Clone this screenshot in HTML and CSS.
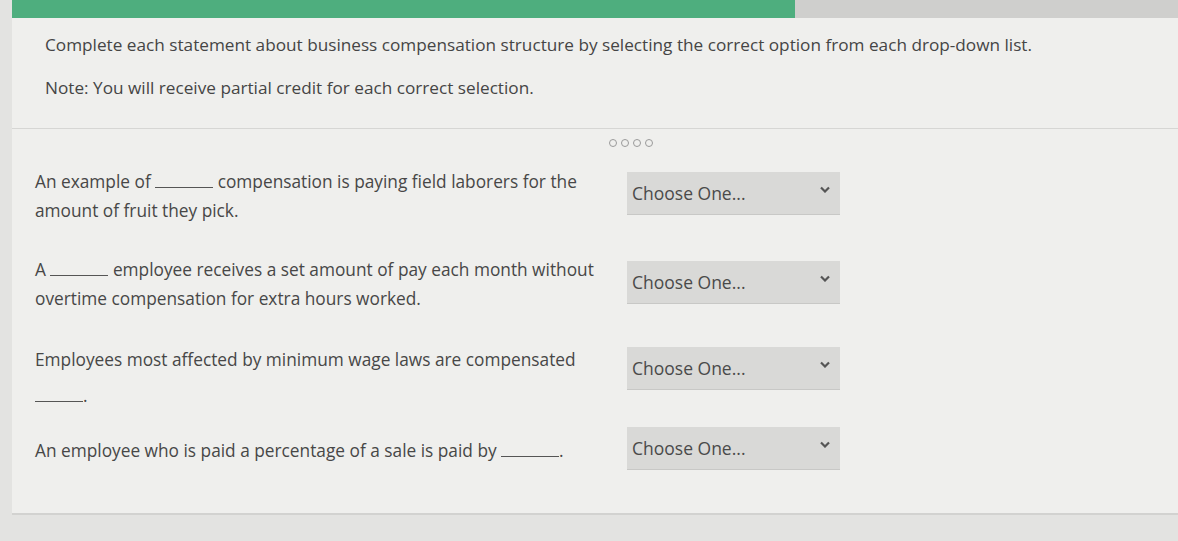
FILE: index.html
```html
<!DOCTYPE html>
<html>
<head>
<meta charset="utf-8">
<link rel="stylesheet" href="styles.css">
</head>
<body>
<div class="page">
  <div class="topbar">
    <div class="progress"></div>
    <div class="rest"></div>
  </div>
  <div class="card">
    <div class="intro">
      <p class="line1">Complete each statement about business compensation structure by selecting the correct option from each drop-down list.</p>
      <p class="line2">Note: You will receive partial credit for each correct selection.</p>
    </div>
    <div class="divider"></div>
    <div class="dots"><span></span><span></span><span></span><span></span></div>
    <div class="questions">
      <div class="row r1">
        <div class="q">An example of <span class="blank"></span> compensation is paying field laborers for the<br>amount of fruit they pick.</div>
        <div class="select"><span>Choose One...</span><svg viewBox="0 0 10 6" class="chev"><path d="M1 1 L5 5 L9 1" /></svg></div>
      </div>
      <div class="row r2">
        <div class="q">A <span class="blank"></span> employee receives a set amount of pay each month without<br>overtime compensation for extra hours worked.</div>
        <div class="select"><span>Choose One...</span><svg viewBox="0 0 10 6" class="chev"><path d="M1 1 L5 5 L9 1" /></svg></div>
      </div>
      <div class="row r3">
        <div class="q">Employees most affected by minimum wage laws are compensated<br><span class="blank b3"></span>.</div>
        <div class="select"><span>Choose One...</span><svg viewBox="0 0 10 6" class="chev"><path d="M1 1 L5 5 L9 1" /></svg></div>
      </div>
      <div class="row r4">
        <div class="q">An employee who is paid a percentage of a sale is paid by <span class="blank"></span>.</div>
        <div class="select"><span>Choose One...</span><svg viewBox="0 0 10 6" class="chev"><path d="M1 1 L5 5 L9 1" /></svg></div>
      </div>
    </div>
  </div>
</div>
</body>
</html>
```
FILE: styles.css
```css
* { box-sizing: border-box; }
html, body { margin: 0; padding: 0; }
body {
  background: #dcdcda;
  font-family: "Open Sans", "Liberation Sans", sans-serif;
  color: #474747;
  width: 1178px;
  height: 541px;
  overflow: hidden;
}
.page {
  padding-left: 12px;
  background: #e3e3e1;
  height: 541px;
}
.topbar {
  display: flex;
  height: 18px;
}
.progress {
  width: 783px;
  background: #4eae7e;
}
.rest {
  flex: 1;
  background: #cfcfcd;
}
.card {
  background: #efefed;
  height: 497px;
  border-bottom: 2px solid #d2d2d0;
}
.intro {
  padding: 15px 0 0 33px;
  height: 110px;
}
.intro p {
  margin: 0;
  font-size: 17.2px;
  color: #454545;
  white-space: nowrap;
}
.line1 { line-height: 24px; }
.line2 { margin-top: 19px !important; line-height: 24px; }
.divider {
  height: 1px;
  background: #d6d6d4;
}
.dots {
  display: flex;
  justify-content: center;
  gap: 4px;
  padding-top: 10px;
  padding-left: 72px;
  height: 38px;
}
.dots span {
  width: 8px;
  height: 8px;
  border: 1.5px solid #9a9a9a;
  border-radius: 50%;
}
.questions {
  padding-left: 23px;
}
.row {
  display: grid;
  grid-template-columns: 592px 213px;
  align-items: start;
}
.q {
  font-size: 17.3px;
  line-height: 29px;
  color: #474747;
  white-space: nowrap;
}
.blank {
  display: inline-block;
  width: 58px;
  border-bottom: 1px solid #555;
  vertical-align: baseline;
}
.b3 { width: 48px; }
.select {
  height: 42px;
  background: #d9d9d7;
  display: flex;
  align-items: center;
  justify-content: space-between;
  padding: 0 10px 0 5px;
  font-size: 17.5px;
  color: #4a4a4a;
  box-shadow: 0 1px 0 #c8c8c6;
}
.chev {
  width: 10px;
  height: 7px;
  margin-top: -8px;
}
.chev path {
  fill: none;
  stroke: #555;
  stroke-width: 2.2;
}
.r1 .select { margin-top: 5px; }
.r2 { margin-top: 30px; }
.r2 .select { margin-top: 6px; }
.r3 { margin-top: 29px; }
.r3 .q { line-height: 36px; }
.r3 .select { margin-top: 5px; }
.r4 { margin-top: 22px; }
.r4 .select { margin-top: -9px; }
```
